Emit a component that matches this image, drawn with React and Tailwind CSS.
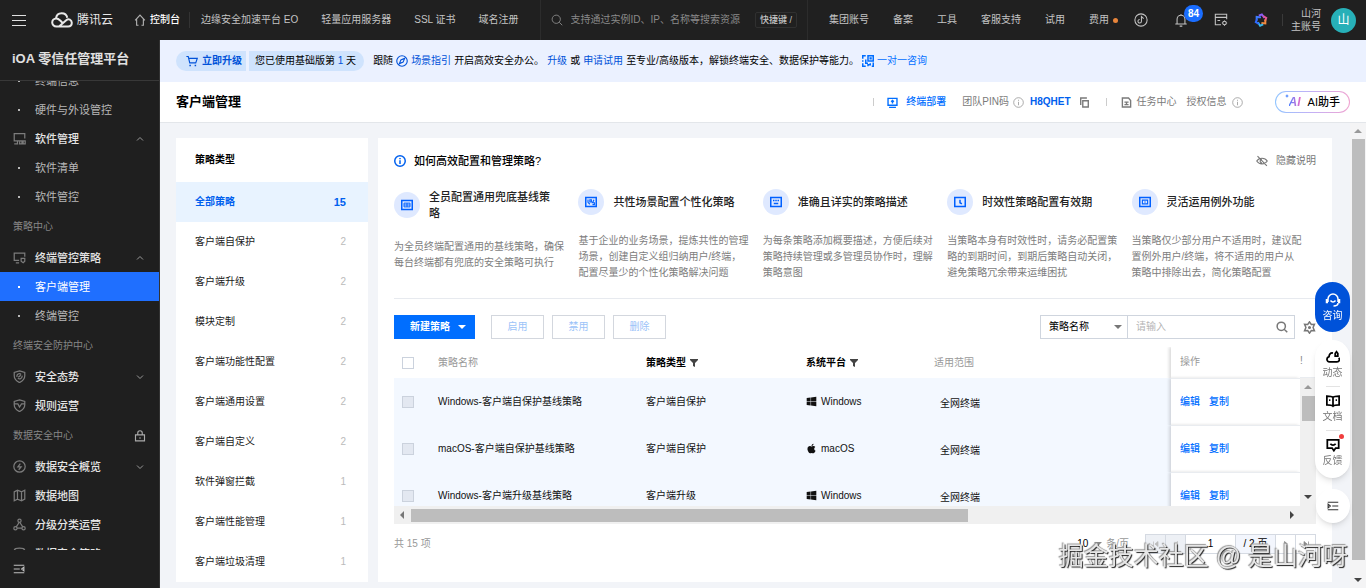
import { useState } from "react";
import { FaApple, FaWindows } from "react-icons/fa";

const NAV_LINKS = ["边缘安全加速平台 EO", "轻量应用服务器", "SSL 证书", "域名注册"];
const TOOL_LINKS = ["集团账号", "备案", "工具", "客服支持", "试用", "费用"];

const MENU = [
  { type: "sub", label: "终端信息" },
  { type: "sub", label: "硬件与外设管控" },
  { type: "item", label: "软件管理", icon: "software", arrow: "up" },
  { type: "sub", label: "软件清单" },
  { type: "sub", label: "软件管控" },
  { type: "group", label: "策略中心" },
  { type: "item", label: "终端管控策略", icon: "terminal", arrow: "up" },
  { type: "sub", label: "客户端管理", active: true },
  { type: "sub", label: "终端管控" },
  { type: "group", label: "终端安全防护中心" },
  { type: "item", label: "安全态势", icon: "shield", arrow: "down" },
  { type: "item", label: "规则运营", icon: "shieldCheck" },
  { type: "group", label: "数据安全中心", locked: true },
  { type: "item", label: "数据安全概览", icon: "compass", arrow: "down" },
  { type: "item", label: "数据地图", icon: "map" },
  { type: "item", label: "分级分类运营", icon: "nodes" },
  { type: "item", label: "数据安全策略", icon: "database" },
];

const POLICY_TYPES = [
  { label: "全部策略", count: 15 },
  { label: "客户端自保护", count: 2 },
  { label: "客户端升级", count: 2 },
  { label: "模块定制", count: 2 },
  { label: "客户端功能性配置", count: 2 },
  { label: "客户端通用设置", count: 2 },
  { label: "客户端自定义", count: 2 },
  { label: "软件弹窗拦截", count: 1 },
  { label: "客户端性能管理", count: 1 },
  { label: "客户端垃圾清理", count: 1 },
];

const GUIDES = [
  { icon: "table", title: "全员配置通用兜底基线策略", text: "为全员终端配置通用的基线策略，确保每台终端都有兜底的安全策略可执行" },
  { icon: "custom", title: "共性场景配置个性化策略", text: "基于企业的业务场景，提炼共性的管理场景，创建自定义组归纳用户/终端，配置尽量少的个性化策略解决问题" },
  { icon: "note", title: "准确且详实的策略描述", text: "为每条策略添加概要描述，方便后续对策略持续管理或多管理员协作时，理解策略意图" },
  { icon: "clock", title: "时效性策略配置有效期", text: "当策略本身有时效性时，请务必配置策略的到期时间，到期后策略自动关闭，避免策略冗余带来运维困扰" },
  { icon: "frame", title: "灵活运用例外功能", text: "当策略仅少部分用户不适用时，建议配置例外用户/终端，将不适用的用户从策略中排除出去，简化策略配置" },
];

const ROWS = [
  { name: "Windows-客户端自保护基线策略", type: "客户端自保护", os: "Windows", scope: "全网终端" },
  { name: "macOS-客户端自保护基线策略", type: "客户端自保护", os: "macOS", scope: "全网终端" },
  { name: "Windows-客户端升级基线策略", type: "客户端升级", os: "Windows", scope: "全网终端" },
];

// all icons are drawn on a 16x16 grid
const ICONS = {
  home: <path d="M1.5 8.5 8 1.5l6.5 7M3.5 7v8H6m6.500-8v8H10" />,
  search: <path d="M7 1.500a5.500 5.500 0 1 0 0 11 5.500 5.500 0 0 0 0-11ZM11 11l4 4" />,
  coin: <path d="M8 1a7 7 0 1 0 0 14A7 7 0 0 0 8 1Zm3 5.500L8.500 4v5.500a2 2 0 1 1-2-2" />,
  bell: <path d="M8 1v1.500M3.500 12V7a4.500 4.500 0 0 1 9 0v5M1.500 12.500h13M6.500 15h3" />,
  windowCog: (
    <>
      <path d="M8 13.500H1.500v-12h13V7M1.500 5h13M4 8.500h3" />
      <circle cx="12" cy="11.500" r="2" />
      <path d="M12 8.500v1m0 4v1m-3-3h1m4 0h1" />
    </>
  ),
  cart: (
    <>
      <path d="M.5 2h2.500l2 8.500h8L15 4.500H4" />
      <path d="M5.500 13v2m7-2v2" strokeWidth="2" />
    </>
  ),
  compassBlue: <path d="M8 1a7 7 0 1 0 0 14A7 7 0 0 0 8 1Zm3.500 3.500L9.500 9.500l-5 2 2-5Z" />,
  qr: (
    <>
      <path d="M5 1H1v4M1 7v2M1 11v4h4" />
      <path d="M8 1h7v7H8ZM11 4h1v1h-1ZM5 6v5h3M8 15v-2h3v-2M15 10v5h-2" />
    </>
  ),
  deploy: <path d="M1.500 2h13v10h-13ZM3 15h10M8 9.500V6M6 7l2-2 2 2" />,
  info: <path d="M8 1a7 7 0 1 0 0 14A7 7 0 0 0 8 1Zm0 6v5M8 4v1.500" />,
  copy: <path d="M5.500 5.500h8v9h-8ZM2.500 11.500v-10h9" />,
  doc: <path d="M2 1.500h9l3 3.500v9.500H2ZM5 7.500h6M5 11h6M8 7v4" />,
  eyeOff: <path d="M1 8c3-5 11-5 14 0-3 5-11 5-14 0ZM2 1.500l12.500 13M8 5.500a2.500 2.500 0 1 0 0 5" />,
  gear: (
    <>
      <path d="m8 1 2.200 3.200 3.900-.2-1.700 4 1.700 4-3.900-.2L8 15l-2.200-3.200-3.900.2 1.700-4-1.700-4 3.900.2Z" />
      <circle cx="8" cy="8" r="1" />
    </>
  ),
  software: <path d="M9 11H1.500v-9h13v6M1.500 14.500h4V11M8.500 11h2.500v3.500H8ZM12.500 11h2.500v3.500h-2.500Z" />,
  terminal: <path d="M7.500 11.500h-6v-9h13V7M3.500 14.500h4M10 9h4.500v3.500l-2 2-2.500-2Z" />,
  shield: <path d="M8 1 14.500 3v4c0 4-2.500 6.500-6.500 8.500C4 13.500 1.500 11 1.500 7V3ZM5 8.500a3 3 0 0 1 5-3M11 7a3 3 0 0 1-5 3M6.500 9l3-2.500" />,
  shieldCheck: <path d="M8 1 14.500 3v4c0 4-2.500 6.500-6.500 8.500C4 13.500 1.500 11 1.500 7V3ZM2 6h4l2 4 2.500-4H14" />,
  compass: <path d="M8 1a7 7 0 1 0 0 14A7 7 0 0 0 8 1Zm1 3.500L6 8.500h4L7 12" />,
  map: <path d="M1.500 3.500 5.500 1.500l5 2 4-2v11l-4 2-5-2-4 2ZM5.500 1.500v11m5-9v11" />,
  nodes: (
    <>
      <circle cx="8" cy="3.500" r="2" />
      <circle cx="3" cy="12.500" r="2" />
      <circle cx="13" cy="12.500" r="2" />
      <path d="M7.500 5.500 4 11m4.500-5.500L12 11M5 12.500h6" />
    </>
  ),
  database: <path d="M1.500 4.500c0-4 13-4 13 0v8c0 4-13 4-13 0ZM1.500 5c2 3 11 3 13 0" />,
  lock: <path d="M2 6.500h12v8H2ZM5 6V4a3 3 0 0 1 6 0v2M8 9.500v2" />,
  collapse: <path d="M1 3h14M1 8h8M1 13h14M14.500 5.500 11.500 8l3 2.500Z" />,
  expand: <path d="M1 3h14M7 8h8M1 13h14M1.500 5.500 4.500 8l-3 2.500Z" />,
  up: <path d="m2 11 6-6 6 6" />,
  down: <path d="m2 5 6 6 6-6" />,
  headset: <path d="M3 11V8a5 5 0 0 1 10 0v3M1.500 8v3.500H3m11.500-3.500v3.500H13M5.500 9.500c1.500 2 3.500 2 5 0M13 12c0 2-2 3-4.500 3" />,
  cloud: <path d="M8 3.500C5 3 3.500 5 3.500 7.500 0 8.500.5 13.500 4 13.500h8.500c3 0 3.500-3 2-4.500M10.500 7V4l1.500-2 1.500 2v3Z" />,
  book: <path d="M8 4v10M8 4C6.500 2.500 4 2.500 1 2.500v10c3 0 5.500 0 7 1.500 1.500-1.500 4-1.500 7-1.500v-10c-3 0-5.500 0-7 1.500ZM3.500 7H5m6 0h1.500" />,
  chat: <path d="M1.500 2h13v9.500H11l-2 3-2-3H1.500ZM5 6.500c1.500 2 4.500 2 6 0" />,
  table: (
    <>
      <path d="M1 2h14v12H1Z" />
      <path d="M4 5.500h8v5H4ZM4 8h8M8 5.500v5" strokeWidth="1.300" />
    </>
  ),
  custom: (
    <>
      <path d="M1 2h14v12H1Z" />
      <path d="M4 4.500v4l2.500 2.500M6.500 5v3h2V5ZM12 5l-2 4h2.500v2.500H10" strokeWidth="1.500" />
    </>
  ),
  note: <path d="M1 2h14v12H1ZM4 6h2m1 0h2m1 0h2M5 10h6" />,
  clock: <path d="M1 2h14v12H1ZM8 5v4l2.500 1.500" />,
  frame: (
    <>
      <path d="M1 2h14v12H1Z" />
      <path d="M4.500 5.500h7v5h-7ZM7 8h2" strokeWidth="1.500" />
    </>
  ),
  first: <path d="M3 3v10M12 3v10L6 8Z" fill="currentColor" />,
  prev: <path d="M11 3v10L5 8Z" fill="currentColor" />,
  next: <path d="M5 3v10l6-5Z" fill="currentColor" />,
  last: <path d="M13 3v10M4 3v10l6-5Z" fill="currentColor" />,
};

function Icon({ name, className = "size-3", stroke = 1.5 }) {
  return (
    <svg
      className={`shrink-0 ${className}`}
      viewBox="0 0 16 16"
      fill="none"
      stroke="currentColor"
      strokeWidth={stroke}
      aria-hidden="true"
    >
      {ICONS[name]}
    </svg>
  );
}

function Triangle({ className }) {
  return (
    <svg className={`h-1 w-2 shrink-0 ${className}`} viewBox="0 0 8 4" fill="currentColor" aria-hidden="true">
      <path d="M0 0h8L4 4Z" />
    </svg>
  );
}

function Funnel() {
  return (
    <svg className="size-2 shrink-0 text-[#444]" viewBox="0 0 8 8" fill="currentColor" aria-hidden="true">
      <path d="M0 0h8v1L5 4v4L3 7V4L0 1Z" />
    </svg>
  );
}

function TopBar() {
  return (
    <header className="flex h-10 shrink-0 items-center bg-[#202020] text-[#c4c4c4]">
      <button className="ml-3 flex w-[14px] flex-col gap-1" aria-label="菜单">
        <span className="h-px w-full bg-[#e0e0e0]" />
        <span className="h-px w-full bg-[#e0e0e0]" />
        <span className="h-px w-full bg-[#e0e0e0]" />
      </button>
      <a href="#" className="ml-[25px] flex items-center gap-1 text-xs text-[#e8e8e8]">
        <svg className="h-4 w-[22px]" viewBox="0 0 22 16" fill="none" stroke="currentColor" strokeWidth="2">
          <path d="M8 14.500 15.500 8c2-1.700 5.300-.3 5.300 2.800 0 2.200-1.600 3.700-3.700 3.700H5.500C2.800 14.500 1.200 12.500 1.200 10.500s1.600-4 4-4c1.600 0 2.500.5 4 2l2 2" />
          <path d="M5 6.500C5.300 3.500 7.500 1.200 10.700 1.200c2.800 0 5 1.800 5.600 4.500" />
        </svg>
        腾讯云
      </a>
      <a href="#" className="ml-[21px] flex items-center gap-1 font-medium text-white">
        <Icon name="home" className="size-3 text-[#b0b0b0]" />
        控制台
      </a>
      <span className="mx-[9px] h-4 w-px bg-[#333]" />
      <nav className="flex gap-[23px] whitespace-nowrap pl-[2px]">
        {NAV_LINKS.map((label) => (
          <a key={label} href="#">
            {label}
          </a>
        ))}
      </nav>
      <div className="ml-[21px] flex h-full flex-1 items-center border-x border-[#2c2c2c] px-[10px]">
        <Icon name="search" className="size-3 text-[#8a8a8a]" stroke={1.2} />
        <input
          className="ml-2 min-w-0 flex-1 bg-transparent placeholder:text-[#8a8a8a]"
          placeholder="支持通过实例ID、IP、名称等搜索资源"
          aria-label="搜索资源"
        />
        <span className="rounded-xs border border-[#303030] px-1 text-[9px] leading-[14px] font-medium">快捷键 /</span>
      </div>
      <nav className="ml-[21px] flex gap-6 whitespace-nowrap">
        {TOOL_LINKS.map((label) => (
          <a key={label} href="#">
            {label}
          </a>
        ))}
      </nav>
      <span className="ml-1 size-[5px] rounded-full bg-[#e8853b]" />
      <button className="ml-4" aria-label="小程序">
        <Icon name="coin" className="size-[14px]" stroke={1.2} />
      </button>
      <button className="relative ml-[26px]" aria-label="消息">
        <Icon name="bell" className="size-[14px]" stroke={1.2} />
        <span className="absolute -top-2 left-[10px] flex h-[17px] w-[19px] items-center justify-center rounded-full bg-[#1a6dff] font-bold text-white">
          84
        </span>
      </button>
      <button className="ml-[26px]" aria-label="工作台">
        <Icon name="windowCog" className="size-[14px]" stroke={1.2} />
      </button>
      <button className="ml-[26px]" aria-label="智能助手">
        <svg className="size-[14px]" viewBox="0 0 16 16" fill="none" strokeWidth="2.200">
          <path d="M3 8.500V4.500L8 5" stroke="#3d7bff" />
          <path d="M5.500 3 9 1.500l3 4" stroke="#8b5cf6" />
          <path d="M10.500 3.500 14 5.500l-1.500 4" stroke="#e2559b" />
          <path d="M13 7.500v4.500L8.500 11.500" stroke="#f0883e" />
          <path d="M10.500 13 7 14.500 4.500 10.500" stroke="#36b5e8" />
          <path d="M5.500 12.500 2 10.500 3.500 7" stroke="#2f6bff" />
        </svg>
      </button>
      <span className="mr-2 ml-[14px] h-3 w-px bg-[#3a3a3a]" />
      <span className="text-right leading-[13px]">
        山河
        <br />
        主账号
      </span>
      <button className="mr-[10px] ml-[10px] size-[25px] rounded-full bg-[#27b0b8] text-xs text-white">山</button>
    </header>
  );
}

function Sidebar() {
  return (
    <aside className="flex w-40 shrink-0 flex-col border-r border-[#333] bg-[#1f1f1f] text-[11px]">
      <h2 className="h-[41px] shrink-0 border-b border-[#383838] pl-3 text-[13px] leading-[38px] font-bold text-[#e0e0e0]">
        iOA 零信任管理平台
      </h2>
      <nav className="min-h-0 flex-1 overflow-hidden">
        <ul className="-mt-[15px]">
          {MENU.map((entry) => {
            if (entry.type === "group") {
              return (
                <li key={entry.label} className="flex h-8 items-center justify-between px-[13px] text-[10px] text-[#868686]">
                  {entry.label}
                  {entry.locked && <Icon name="lock" className="size-3 text-[#aaa]" />}
                </li>
              );
            }
            if (entry.type === "sub") {
              return (
                <li key={entry.label}>
                  <a
                    href="#"
                    className={`flex h-[29px] items-center pl-[18px] ${entry.active ? "bg-[#1f6fff] text-white" : "text-[#b8b8b8]"}`}
                  >
                    <span className="mr-[15px] size-[2px] bg-current" />
                    {entry.label}
                  </a>
                </li>
              );
            }
            return (
              <li key={entry.label}>
                <a href="#" className="flex h-[29px] items-center pr-[15px] pl-[13px] font-medium text-[#e4e4e4]">
                  <Icon name={entry.icon} className="mr-[9px] size-[13px] text-[#7c7c7c]" />
                  {entry.label}
                  {entry.arrow && <Icon name={entry.arrow} className="ml-auto size-2 text-[#999]" stroke={2} />}
                </a>
              </li>
            );
          })}
        </ul>
      </nav>
      <button className="flex h-[38px] shrink-0 items-center pl-[13px] text-[#c0c0c0]" aria-label="收起菜单">
        <Icon name="collapse" />
      </button>
    </aside>
  );
}

function Banner() {
  return (
    <div className="flex h-[42px] shrink-0 items-center gap-[3px] overflow-hidden bg-[#ebf1ff] px-4 whitespace-nowrap text-black">
      <button className="flex h-5 items-center gap-1 rounded-l-full bg-[#cfe3fd] pr-1 pl-[10px] font-bold text-[#0052d9]">
        <Icon name="cart" className="size-3" />
        立即升级
      </button>
      <span className="mr-[6px] flex h-5 items-center rounded-r-full bg-[#cfe3fd] pr-2 pl-[6px]">
        您已使用基础版第&nbsp;<span className="text-[#0052d9]">1</span>&nbsp;天
      </span>
      <span>跟随</span>
      <a href="#" className="flex items-center gap-[3px] text-[#0052d9]">
        <Icon name="compassBlue" />
        场景指引
      </a>
      <span>开启高效安全办公。</span>
      <a href="#" className="text-[#0052d9]">
        升级
      </a>
      <span>或</span>
      <a href="#" className="text-[#0052d9]">
        申请试用
      </a>
      <span>至专业/高级版本，解锁终端安全、数据保护等能力。</span>
      <a href="#" className="flex items-center gap-[3px] text-[#006eff]">
        <Icon name="qr" stroke={2} />
        一对一咨询
      </a>
    </div>
  );
}

function PageHeader() {
  return (
    <div className="flex h-[41px] shrink-0 items-center border-b border-[#e3e6ea] bg-white px-4 whitespace-nowrap text-[#7a7a7a]">
      <h1 className="flex-1 text-[13px] font-bold text-black">客户端管理</h1>
      <span className="h-2 w-px bg-[#ccc]" />
      <a href="#" className="ml-[13px] flex items-center gap-2 font-medium text-[#006eff]">
        <Icon name="deploy" className="size-[11px]" stroke={2} />
        终端部署
      </a>
      <span className="ml-4">团队PIN码</span>
      <Icon name="info" className="ml-1 size-[11px] text-[#999]" stroke={1.2} />
      <span className="ml-[6px] font-bold text-[#0060ee]">H8QHET</span>
      <button className="ml-2" aria-label="复制">
        <Icon name="copy" className="size-[11px]" stroke={2} />
      </button>
      <span className="ml-4 h-2 w-px bg-[#ccc]" />
      <a href="#" className="ml-[14px] flex items-center gap-[5px]">
        <Icon name="doc" className="size-[11px]" stroke={2} />
        任务中心
      </a>
      <a href="#" className="ml-[10px] flex items-center gap-[5px]">
        授权信息
        <Icon name="info" className="size-[11px] text-[#999]" stroke={1.2} />
      </a>
      <button className="ml-8 rounded-full bg-linear-to-r from-[#8fc4ff] via-[#c3b0f5] to-[#f0a3d0] p-px">
        <span className="flex h-5 items-center gap-[6px] rounded-full bg-white px-[9px] text-[11px] font-medium text-black">
          <span className="flex items-start">
            <svg className="size-1" viewBox="0 0 4 4" fill="#3d7bff" aria-hidden="true">
              <path d="M2 0 2.600 1.400 4 2 2.600 2.600 2 4 1.400 2.600 0 2 1.400 1.400Z" />
            </svg>
            <span className="bg-linear-to-r from-[#4a7dff] to-[#f25cc0] bg-clip-text pr-px text-xs font-bold text-transparent italic">AI</span>
          </span>
          AI助手
        </span>
      </button>
    </div>
  );
}

function PolicyTypes() {
  const [current, setCurrent] = useState("全部策略");

  return (
    <section className="w-48 shrink-0 bg-white">
      <h3 className="h-11 pl-[19px] leading-[44px] font-bold text-black">策略类型</h3>
      <ul>
        {POLICY_TYPES.map(({ label, count }) => {
          const active = label === current;
          return (
            <li key={label}>
              <button
                onClick={() => setCurrent(label)}
                className={`flex h-10 w-full items-center justify-between pr-[22px] pl-[19px] ${
                  active ? "bg-[#e8f3ff] font-bold text-[#0060ee]" : "text-[#1a1a1a]"
                }`}
              >
                {label}
                <span className={active ? "text-[11px]" : "text-[#bbb]"}>{count}</span>
              </button>
            </li>
          );
        })}
      </ul>
    </section>
  );
}

function Guides() {
  return (
    <div className="border-b border-[#e7eaef] pb-[17px]">
      <div className="flex h-4 items-center">
        <Icon name="info" className="size-3 text-[#0060ee]" stroke={2} />
        <h3 className="ml-2 flex-1 text-[11px] font-medium text-black">如何高效配置和管理策略?</h3>
        <button className="flex items-center gap-2 text-[#777]">
          <Icon name="eyeOff" />
          隐藏说明
        </button>
      </div>
      <div className="mt-5 grid grid-cols-5">
        {GUIDES.map(({ icon, title, text }) => (
          <div key={icon} className="pr-3">
            <div className="flex items-center gap-[9px]">
              <span className="flex size-[26px] shrink-0 items-center justify-center rounded-full bg-[#dfe9ff] text-[#0060ff]">
                <Icon name={icon} className="size-3" stroke={2} />
              </span>
              <h4 className="flex-1 pr-2 text-[11px] leading-4 font-medium text-[#222]">{title}</h4>
            </div>
            <p className="mt-[18px] leading-4 text-[#7d7d7d]">{text}</p>
          </div>
        ))}
      </div>
    </div>
  );
}

function Toolbar() {
  return (
    <div className="flex h-6 items-center gap-2">
      <button className="mr-2 flex h-full items-center gap-2 bg-[#006eff] px-[9px] pl-4 font-bold text-white">
        新建策略
        <Triangle className="text-white" />
      </button>
      {["启用", "禁用", "删除"].map((label) => (
        <button key={label} disabled className="h-full w-[53px] border border-[#d3d7de] text-[#9cc3f8]">
          {label}
        </button>
      ))}
      <div className="ml-auto flex h-full items-center">
        <div className="relative h-full">
          <select
            aria-label="搜索字段"
            className="h-full w-[88px] appearance-none border border-[#cfd5de] bg-white pl-2 text-black"
          >
            <option>策略名称</option>
          </select>
          <Triangle className="pointer-events-none absolute top-[10px] right-[6px] text-[#777]" />
        </div>
        <label className="flex h-full w-[167px] items-center border border-l-0 border-[#cfd5de] pr-[6px] pl-2">
          <input className="min-w-0 flex-1 placeholder:text-[#b5b5b5]" placeholder="请输入" aria-label="搜索关键字" />
          <Icon name="search" className="size-3 text-[#777]" stroke={2} />
        </label>
        <button className="ml-2 text-[#777]" aria-label="表格设置">
          <Icon name="gear" className="size-[13px]" stroke={1.8} />
        </button>
      </div>
    </div>
  );
}

function PolicyTable() {
  const box = "block size-3 appearance-none border border-[#cbd2dd]";
  const pinned = "border-b border-[#e9ecf0] bg-white pl-[9px] shadow-[-2px_0_3px_rgba(0,0,0,0.14)]";

  return (
    <div className="mt-2">
      <div className="flex h-[159px]">
        <div className="min-w-0 flex-1 overflow-hidden">
          <table className="w-full table-fixed text-left text-[#111]">
            <colgroup>
              <col className="w-[44px]" />
              <col className="w-[208px]" />
              <col className="w-[160px]" />
              <col className="w-[128px]" />
              <col />
              <col className="w-[129px]" />
            </colgroup>
            <thead>
              <tr className="h-[31px] text-[#999]">
                <th className="pl-2">
                  <input type="checkbox" className={box} aria-label="全选" />
                </th>
                <th className="font-normal">策略名称</th>
                <th className="font-bold text-black">
                  <span className="flex items-center gap-1">
                    策略类型 <Funnel />
                  </span>
                </th>
                <th className="font-bold text-black">
                  <span className="flex items-center gap-1">
                    系统平台 <Funnel />
                  </span>
                </th>
                <th className="font-normal">适用范围</th>
                <th className={`font-normal ${pinned}`}>操作</th>
              </tr>
            </thead>
            <tbody>
              {ROWS.map((row) => (
                <tr key={row.name} className="h-[47px] bg-[#f3f8ff]">
                  <td className="pl-2">
                    <input type="checkbox" disabled className={`bg-[#e3e8f1] ${box}`} aria-label={row.name} />
                  </td>
                  <td>{row.name}</td>
                  <td>{row.type}</td>
                  <td>
                    <span className="flex items-center gap-1">
                      {row.os === "macOS" ? <FaApple className="size-[11px]" /> : <FaWindows className="size-[11px]" />}
                      {row.os}
                    </span>
                  </td>
                  <td className="pt-1 pl-[6px]">{row.scope}</td>
                  <td className={pinned}>
                    <span className="flex gap-[9px] font-medium text-[#006eff]">
                      <a href="#">编辑</a>
                      <a href="#">复制</a>
                    </span>
                  </td>
                </tr>
              ))}
            </tbody>
          </table>
        </div>
        <div className="flex w-4 shrink-0 flex-col">
          <span className="h-[31px] border-b border-[#e9ecf0] leading-[28px] text-[#888]">!</span>
          <div className="flex flex-1 flex-col items-center bg-[#f0f0f0] py-[7px]" aria-hidden="true">
            <Triangle className="rotate-180 text-[#999]" />
            <span className="mt-[7px] h-[25px] w-[13px] bg-[#bdbdbd]" />
            <Triangle className="mt-auto text-[#444]" />
          </div>
        </div>
      </div>
      <div className="flex h-[18px] items-center bg-[#f0f0f0] pr-5 pl-1" aria-hidden="true">
        <Triangle className="rotate-90 text-[#777]" />
        <span className="mr-auto ml-[5px] h-[13px] w-[62%] bg-[#bdbdbd]" />
        <Triangle className="-rotate-90 text-[#444]" />
      </div>
    </div>
  );
}

function Pager() {
  const cell = "flex h-full items-center justify-center border-r border-[#d5dae2]";

  return (
    <div className="flex h-5 items-center text-[#999]">
      <span className="flex-1">共 15 项</span>
      <label className="mr-4 flex items-center gap-2">
        <span className="relative">
          <select className="w-[21px] appearance-none text-black" aria-label="每页条数">
            <option>10</option>
          </select>
          <Triangle className="pointer-events-none absolute top-[6px] -right-1 text-[#888]" />
        </span>
        条/页
      </label>
      <div className="flex h-5 border border-r-0 border-[#d5dae2]">
        <button disabled className={`w-5 bg-[#edf0f5] text-[#bbb] ${cell}`} aria-label="首页">
          <Icon name="first" className="size-2" />
        </button>
        <button disabled className={`w-5 bg-[#edf0f5] text-[#bbb] ${cell}`} aria-label="上一页">
          <Icon name="prev" className="size-2" />
        </button>
        <input className="w-[50px] border-r border-[#d5dae2] text-center text-black" defaultValue="1" aria-label="页码" />
        <span className={`w-10 bg-[#f3f6fd] text-black ${cell}`}>/ 2 页</span>
        <button className={`w-5 text-[#888] ${cell}`} aria-label="下一页">
          <Icon name="next" className="size-2" />
        </button>
        <button className={`w-5 text-[#888] ${cell}`} aria-label="末页">
          <Icon name="last" className="size-2" />
        </button>
      </div>
    </div>
  );
}

function FloatingTools() {
  const tools = [
    { icon: "cloud", label: "动态" },
    { icon: "book", label: "文档" },
    { icon: "chat", label: "反馈", dot: true },
  ];

  return (
    <div className="fixed right-4 bottom-[65px] flex w-[35px] flex-col items-center">
      <button className="flex h-[50px] w-full flex-col items-center justify-center gap-[2px] rounded-full bg-[#0052d9] leading-[14px] text-white">
        <Icon name="headset" className="size-4" />
        咨询
      </button>
      <div className="mt-2 flex h-[138px] w-full flex-col items-center rounded-full bg-white pt-[10px] shadow-md">
        {tools.map(({ icon, label, dot }) => (
          <button
            key={label}
            className="group relative flex h-11 shrink-0 flex-col items-center gap-[2px] leading-[14px] text-[#777]"
          >
            <Icon name={icon} className="size-[14px] text-black" stroke={2} />
            {label}
            <span className="mt-1 h-px w-[14px] bg-[#e3e3e3] group-last:hidden" />
            {dot && <span className="absolute -top-1 -right-px size-[5px] rounded-full bg-[#f03e3e]" />}
          </button>
        ))}
      </div>
      <button className="mt-[11px] flex size-[34px] items-center justify-center rounded-full bg-white text-[#333] shadow-md" aria-label="收起工具栏">
        <Icon name="expand" className="size-3" />
      </button>
    </div>
  );
}

export default function App() {
  return (
    <div className="flex h-screen flex-col overflow-hidden bg-[#f2f4f8] font-['Liberation_Sans','Noto_Sans_CJK_SC',sans-serif] text-[10px] leading-4">
      <TopBar />
      <div className="flex min-h-0 flex-1">
        <Sidebar />
        <main className="flex min-w-0 flex-1 flex-col">
          <Banner />
          <PageHeader />
          <div className="flex min-h-0 flex-1">
            <div className="flex min-w-0 flex-1 items-start gap-[10px] overflow-hidden pt-[15px] pr-[18px] pl-4">
              <PolicyTypes />
              <section className="mb-[6px] flex min-w-0 flex-1 flex-col self-stretch bg-white px-4 pt-[15px]">
                <Guides />
                <div className="pt-4">
                  <Toolbar />
                  <PolicyTable />
                </div>
                <div className="pt-[10px]">
                  <Pager />
                </div>
              </section>
            </div>
            <div className="flex w-4 shrink-0 flex-col items-center bg-[#f4f4f5] py-[6px]" aria-hidden="true">
              <Triangle className="rotate-180 text-[#999]" />
              <span className="my-[6px] w-[13px] flex-1 bg-[#bdbdbd]" />
              <Triangle className="mt-3 text-[#444]" />
            </div>
          </div>
        </main>
      </div>
      <FloatingTools />
      <div className="pointer-events-none fixed right-[18px] bottom-4 text-[25px] leading-8 whitespace-nowrap text-[#e6e6e6] [text-shadow:1px_1px_1px_#222,-1px_-1px_1px_#999]">
        掘金技术社区 @ 是山河呀
      </div>
    </div>
  );
}
